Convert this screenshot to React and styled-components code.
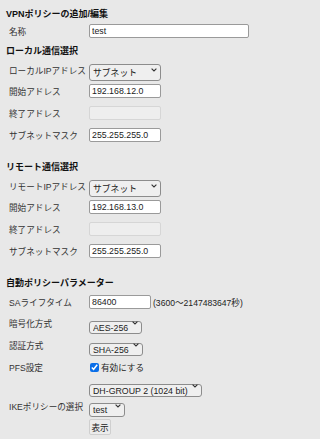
import React from "react";
import styled, { createGlobalStyle } from "styled-components";

const Global = createGlobalStyle`
  html, body { margin: 0; padding: 0; background: #e8e8e8; }
  body { font-family: "Liberation Sans", "Noto Sans CJK JP", sans-serif; color: #222; }
`;

const Page = styled.div`
  width: 284px;
  height: 439px;
  box-sizing: border-box;
  padding: 4px 0 0 6px;
  background: #e8e8e8;
  overflow: hidden;
`;

const Title = styled.div`
  height: 18px;
  display: flex;
  align-items: center;
  font-size: 9px;
  font-weight: bold;
  color: #111;
`;

const Heading = styled.div`
  height: 20px;
  margin-top: ${(p) => p.$gap || 0}px;
  display: flex;
  align-items: center;
  font-size: 9px;
  font-weight: bold;
  color: #111;
`;

const Row = styled.div`
  height: ${(p) => p.$h || 22}px;
  display: flex;
  align-items: center;
`;

const Label = styled.div`
  width: 80px;
  padding-left: 3px;
  font-size: 8.6px;
  color: #333;
  white-space: nowrap;
`;

const TextInput = styled.input`
  box-sizing: border-box;
  width: ${(p) => p.$w}px;
  height: 14px;
  padding: 0 2px;
  margin: 0;
  border: 1px solid ${(p) => (p.disabled ? "#d6d6d6" : "#9a9a9a")};
  border-radius: 2px;
  background: ${(p) => (p.disabled ? "#eeeeee" : "#ffffff")};
  font-family: "Liberation Sans", "Noto Sans CJK JP", sans-serif;
  font-size: 8.8px;
  color: #222;
  outline: none;
`;

const SelectWrap = styled.div`
  position: relative;
  width: ${(p) => p.$w}px;
  height: ${(p) => p.$h}px;
`;

const Select = styled.select`
  appearance: none;
  -webkit-appearance: none;
  box-sizing: border-box;
  width: 100%;
  height: 100%;
  margin: 0;
  padding: 0 12px 0 3px;
  border: 1px solid #8c8c8c;
  border-radius: 3px;
  background: #efefef;
  font-family: "Liberation Sans", "Noto Sans CJK JP", sans-serif;
  font-size: ${(p) => p.$fs || 8.8}px;
  color: #222;
  outline: none;
`;

const Chevron = styled.svg`
  position: absolute;
  right: 4px;
  top: 50%;
  width: 6px;
  height: 4px;
  margin-top: -2px;
  pointer-events: none;
`;

const Note = styled.span`
  margin-left: 2px;
  font-size: 8.6px;
  color: #222;
  white-space: nowrap;
`;

const CheckLabel = styled.label`
  display: flex;
  align-items: center;
  gap: 2px;
  font-size: 8.6px;
  color: #222;
  margin-left: 1px;
`;

const Check = styled.input`
  width: 9px;
  height: 9px;
  margin: 0;
  accent-color: #0a6ee8;
`;

const Button = styled.button`
  box-sizing: border-box;
  width: 22px;
  height: 16px;
  padding: 0;
  border: 1px solid #cfcfcf;
  border-radius: 2px;
  background: #ececec;
  font-family: "Liberation Sans", "Noto Sans CJK JP", sans-serif;
  font-size: 8.6px;
  color: #222;
`;

function Dropdown({ w, h, fs, value, options }) {
  return (
    <SelectWrap $w={w} $h={h}>
      <Select $fs={fs} defaultValue={value}>
        {options.map((o) => (
          <option key={o}>{o}</option>
        ))}
      </Select>
      <Chevron viewBox="0 0 6 4">
        <path d="M0.6 0.6 L3 3 L5.4 0.6" fill="none" stroke="#333" strokeWidth="1.1" />
      </Chevron>
    </SelectWrap>
  );
}

function AddressBlock({ title, ipLabel, start, gap }) {
  return (
    <>
      <Heading $gap={gap}>{title}</Heading>
      <Row $h={20}>
        <Label>{ipLabel}</Label>
        <Dropdown w={72} h={17} value="サブネット" options={["サブネット", "単一", "範囲"]} />
      </Row>
      <Row>
        <Label>開始アドレス</Label>
        <TextInput $w={72} defaultValue={start} />
      </Row>
      <Row>
        <Label>終了アドレス</Label>
        <TextInput $w={72} disabled />
      </Row>
      <Row>
        <Label>サブネットマスク</Label>
        <TextInput $w={72} defaultValue="255.255.255.0" />
      </Row>
    </>
  );
}

export default function App() {
  return (
    <>
      <Global />
      <Page>
        <Title>VPNポリシーの追加/編集</Title>
        <Row $h={18}>
          <Label>名称</Label>
          <TextInput $w={160} defaultValue="test" />
        </Row>
        <AddressBlock title="ローカル通信選択" ipLabel="ローカルIPアドレス" start="192.168.12.0" />
        <AddressBlock title="リモート通信選択" ipLabel="リモートIPアドレス" start="192.168.13.0" gap={10} />
        <Heading $gap={10}>自動ポリシーパラメーター</Heading>
        <Row $h={20}>
          <Label>SAライフタイム</Label>
          <TextInput $w={62} defaultValue="86400" />
          <Note>(3600～2147483647秒)</Note>
        </Row>
        <Row>
          <Label>暗号化方式</Label>
          <Dropdown w={53} h={13} value="AES-256" options={["AES-256", "AES-128", "3DES"]} />
        </Row>
        <Row>
          <Label>認証方式</Label>
          <Dropdown w={54} h={13} value="SHA-256" options={["SHA-256", "SHA-1", "MD5"]} />
        </Row>
        <Row>
          <Label>PFS設定</Label>
          <CheckLabel>
            <Check type="checkbox" defaultChecked />
            有効にする
          </CheckLabel>
        </Row>
        <Row $h={16}>
          <Label />
          <Dropdown
            w={113}
            h={13}
            value="DH-GROUP 2 (1024 bit)"
            options={["DH-GROUP 1 (768 bit)", "DH-GROUP 2 (1024 bit)", "DH-GROUP 5 (1536 bit)"]}
          />
        </Row>
        <Row $h={24}>
          <Label>IKEポリシーの選択</Label>
          <Dropdown w={36} h={14} value="test" options={["test"]} />
        </Row>
        <Row $h={18}>
          <Label />
          <Button>表示</Button>
        </Row>
      </Page>
    </>
  );
}
